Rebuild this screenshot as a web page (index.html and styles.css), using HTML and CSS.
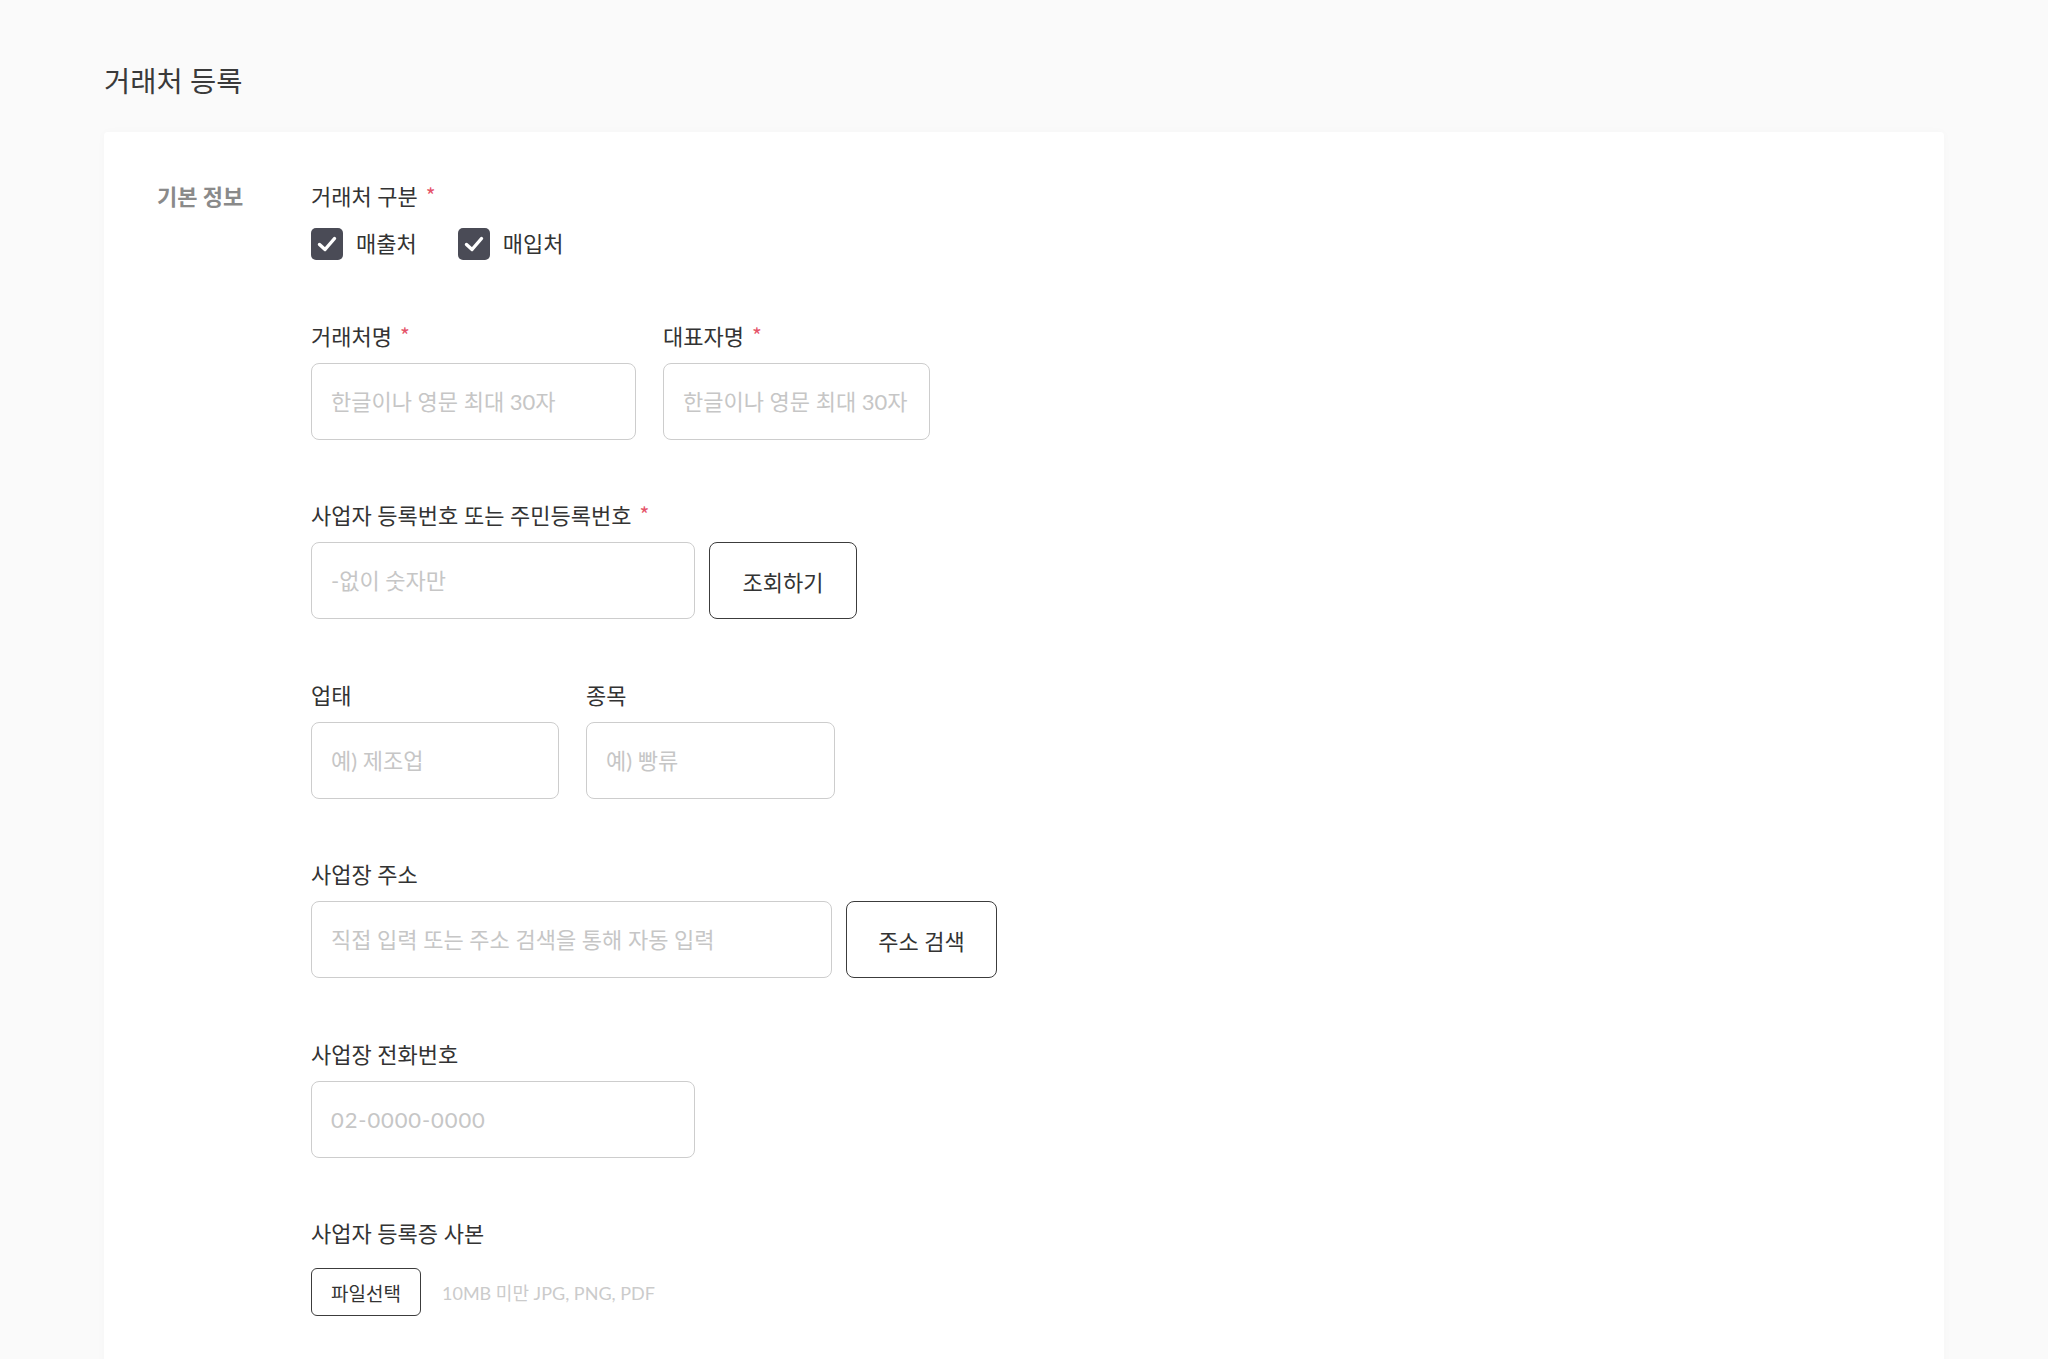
FILE: index.html
```html
<!DOCTYPE html>
<html lang="ko">
<head>
<meta charset="utf-8">
<title>거래처 등록</title>
<link rel="stylesheet" href="styles.css">
</head>
<body>
<main class="page">
  <h1 class="page-title">거래처 등록</h1>
  <section class="card">
    <h2 class="section-title">기본 정보</h2>
    <div class="fields">
      <div class="group">
        <div class="label label--check">거래처 구분<span class="req">*</span></div>
        <div class="check-row">
          <label class="check">
            <span class="check-box"><svg viewBox="0 0 32 32" width="32" height="32"><path d="M8.5 16.5 L14 21.5 L23.5 10.5" fill="none" stroke="#fff" stroke-width="3.4" stroke-linecap="round" stroke-linejoin="round"/></svg></span>
            <span class="check-text">매출처</span>
          </label>
          <label class="check">
            <span class="check-box"><svg viewBox="0 0 32 32" width="32" height="32"><path d="M8.5 16.5 L14 21.5 L23.5 10.5" fill="none" stroke="#fff" stroke-width="3.4" stroke-linecap="round" stroke-linejoin="round"/></svg></span>
            <span class="check-text">매입처</span>
          </label>
        </div>
      </div>

      <div class="row">
        <div class="group">
          <div class="label">거래처명<span class="req">*</span></div>
          <input class="input input--name" type="text" placeholder="한글이나 영문 최대 30자">
        </div>
        <div class="group">
          <div class="label">대표자명<span class="req">*</span></div>
          <input class="input input--rep" type="text" placeholder="한글이나 영문 최대 30자">
        </div>
      </div>

      <div class="group">
        <div class="label">사업자 등록번호 또는 주민등록번호<span class="req">*</span></div>
        <div class="input-row">
          <input class="input input--mid" type="text" placeholder="-없이 숫자만">
          <button class="btn btn--lookup" type="button">조회하기</button>
        </div>
      </div>

      <div class="row">
        <div class="group">
          <div class="label">업태</div>
          <input class="input input--short" type="text" placeholder="예) 제조업">
        </div>
        <div class="group">
          <div class="label">종목</div>
          <input class="input input--short2" type="text" placeholder="예) 빵류">
        </div>
      </div>

      <div class="group">
        <div class="label">사업장 주소</div>
        <div class="input-row">
          <input class="input input--addr" type="text" placeholder="직접 입력 또는 주소 검색을 통해 자동 입력">
          <button class="btn btn--addr" type="button">주소 검색</button>
        </div>
      </div>

      <div class="group">
        <div class="label">사업장 전화번호</div>
        <input class="input input--mid input--phone" type="text" placeholder="02-0000-0000">
      </div>

      <div class="group">
        <div class="label label--file">사업자 등록증 사본</div>
        <div class="file-row">
          <button class="btn btn--file" type="button">파일선택</button>
          <span class="file-hint">10MB 미만 JPG, PNG, PDF</span>
        </div>
      </div>
    </div>
  </section>
</main>
</body>
</html>
```

FILE: styles.css
```css
* {
  box-sizing: border-box;
}

html, body {
  margin: 0;
  padding: 0;
  background: #fafafa;
}

body {
  font-family: Lato, "Noto Sans CJK KR", "Noto Sans", sans-serif;
  color: #333;
  overflow: hidden;
  height: 1359px;
}

.page {
  padding: 63px 104px 0 104px;
}

.page-title {
  margin: 0 0 33px 0;
  font-size: 28.5px;
  line-height: 36px;
  font-weight: 400;
  color: #3a3a3a;
}

.card {
  background: #fff;
  border-radius: 4px;
  box-shadow: 0 0 10px rgba(0, 0, 0, 0.025);
  display: grid;
  grid-template-columns: 154px 1fr;
  padding: 51px 53px 200px 53px;
  min-height: 1300px;
}

.section-title {
  margin: 0;
  font-size: 22px;
  line-height: 28px;
  font-weight: 700;
  color: #8a8a8a;
  white-space: nowrap;
}

.fields {
  display: flex;
  flex-direction: column;
  gap: 62.5px;
}

.row {
  display: flex;
  gap: 27px;
}

.group {
  display: flex;
  flex-direction: column;
}

.label {
  font-size: 22px;
  line-height: 28px;
  color: #333;
  margin-bottom: 12px;
  white-space: nowrap;
}

.label--check {
  margin-bottom: 17px;
}

.label--file {
  margin-bottom: 20px;
}

.req {
  display: inline-block;
  color: #e5546a;
  font-family: "Noto Sans CJK KR", "Noto Sans", sans-serif;
  font-size: 21px;
  margin-left: 8px;
  vertical-align: top;
  line-height: 24px;
}

.check-row {
  display: flex;
  gap: 41px;
  align-items: center;
}

.check {
  display: flex;
  align-items: center;
  gap: 13px;
}

.check-box {
  width: 32px;
  height: 32px;
  border-radius: 5px;
  background: #4a4b56;
  display: block;
}

.check-box svg {
  display: block;
}

.check-text {
  font-size: 22px;
  line-height: 28px;
  color: #333;
}

.input {
  height: 77px;
  border: 1.5px solid #cdcdcd;
  border-radius: 8px;
  padding: 0 19px;
  font-family: Lato, "Noto Sans CJK KR", "Noto Sans", sans-serif;
  font-size: 22px;
  color: #333;
  background: #fff;
  outline: none;
}

.input::placeholder {
  color: #c6c6c6;
}

.input--phone {
  letter-spacing: 0.9px;
}

.input--name { width: 325px; }
.input--rep { width: 267px; }
.input--mid { width: 384px; }
.input--short { width: 248px; }
.input--short2 { width: 249px; }
.input--addr { width: 521px; }

.input-row {
  display: flex;
  gap: 14px;
}

.btn {
  height: 77px;
  border: 1.5px solid #3c3c3c;
  border-radius: 8px;
  background: #fff;
  font-family: Lato, "Noto Sans CJK KR", "Noto Sans", sans-serif;
  font-size: 22px;
  color: #333;
  padding: 0;
  cursor: pointer;
}

.btn--lookup { width: 148px; }
.btn--addr { width: 151px; }

.btn--file {
  width: 110px;
  height: 48px;
  font-size: 19px;
  border-radius: 6px;
}

.file-row {
  display: flex;
  align-items: center;
  gap: 21px;
}

.file-hint {
  font-size: 18px;
  color: #cbcbcb;
}
```
